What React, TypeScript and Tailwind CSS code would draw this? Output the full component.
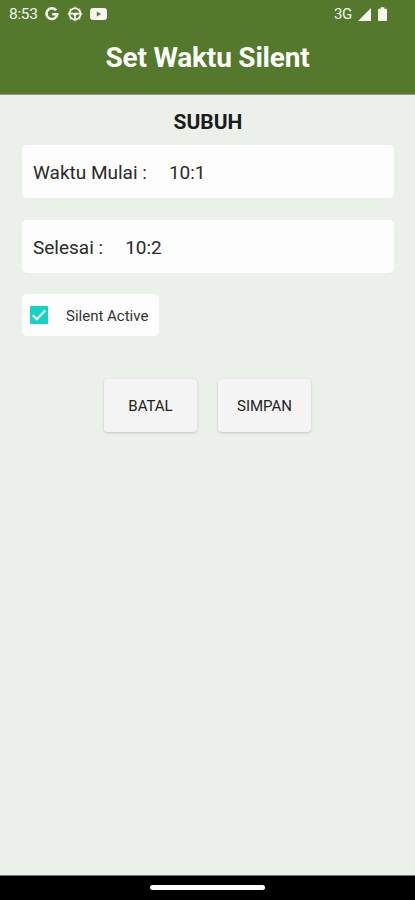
import React from 'react';

function StatusBar() {
  return (
    <div className="flex h-7 items-center pl-[9px] pr-[28px] text-[#f4f8ee]">
      <span className="w-[36px] text-[15.5px] leading-7 tracking-[-0.3px]">8:53</span>
      <svg className="h-[14px] w-[14px]" viewBox="0 0 14 14" fill="none" stroke="currentColor" strokeWidth="2.5">
        <path d="M11.2 3.3A5.4 5.4 0 1 0 12.3 7.3H7.3" />
      </svg>
      <svg className="ml-[8px] h-[16px] w-[16px]" viewBox="0 0 16 16" fill="none" stroke="currentColor">
        <circle cx="8" cy="8" r="5.6" strokeWidth="1.8" />
        <circle cx="8" cy="8" r="6.8" strokeWidth="0.9" strokeDasharray="2.2 3.14" strokeDashoffset="1.1" />
        <path d="M3 7.6h10M8 8v5" strokeWidth="1.6" />
        <path d="M5.5 7H10.5L9 10H7Z" fill="currentColor" stroke="none" />
      </svg>
      <svg className="ml-[7px] h-[12px] w-[17px]" viewBox="0 0 17 12">
        <rect width="17" height="12" rx="3" fill="currentColor" />
        <path d="M6.8 3.5L11 6L6.8 8.5Z" fill="#54782c" />
      </svg>
      <span className="ml-auto w-[24px] text-[15px] leading-7 tracking-[-0.4px]">3G</span>
      <svg className="h-[13px] w-[13px]" viewBox="0 0 13 13" fill="currentColor">
        <path d="M13 0V13H0Z" />
      </svg>
      <svg className="ml-[7px] h-[14px] w-[9px]" viewBox="0 0 9 14" fill="currentColor">
        <path d="M2.7 0.3H6.3V1.8H8Q9 1.8 9 2.8V13Q9 14 8 14H1Q0 14 0 13V2.8Q0 1.8 1 1.8H2.7Z" />
      </svg>
    </div>
  );
}

function TimeField({ label, value }: { label: string; value: string }) {
  return (
    <div className="flex h-[53px] items-center gap-[22px] rounded-[5px] bg-[#fcfdfc] pt-[3px] pl-[11px] text-[19px] text-[#2a2a2a]">
      <span>{label}</span>
      <span>{value}</span>
    </div>
  );
}

function ActionButton({ label }: { label: string }) {
  return (
    <button className="h-[53px] w-[93px] rounded-[4px] bg-[#f3f4f3] pt-[2px] text-[15px] text-[#222] shadow-[0_1px_3px_rgba(0,0,0,0.18)]">
      {label}
    </button>
  );
}

export default function App() {
  return (
    <div className="flex h-[900px] w-[415px] flex-col bg-[#ebf0eb] font-[Roboto,sans-serif]">
      <header className="h-[95px] border-b border-[#8ba570] bg-[#54782c]">
        <StatusBar />
        <h1 className="text-center text-[28px] leading-[59px] font-bold tracking-[-0.2px] text-[#fbfdf9]">Set Waktu Silent</h1>
      </header>
      <main className="flex flex-1 flex-col pr-[21px] pl-[22px]">
        <h2 className="h-[50px] pt-[1px] text-center text-[21px] leading-[52px] font-bold text-[#1b1c1b]">SUBUH</h2>
        <div className="flex flex-col gap-[22px]">
          <TimeField label="Waktu Mulai :" value="10:1" />
          <TimeField label="Selesai :" value="10:2" />
        </div>
        <label className="mt-[21px] flex h-[42px] w-[137px] items-center rounded-[5px] bg-[#fcfdfc] pl-[8px] text-[15px] text-[#333]">
          <svg className="mr-[18px] h-[18px] w-[18px]" viewBox="0 0 18 18">
            <rect width="18" height="18" rx="1" fill="#14d3c4" />
            <path d="M2.8 9.3L6.8 13.2L15.2 4.6" fill="none" stroke="#fff" strokeWidth="2.2" />
          </svg>
          <span className="pt-[2px] whitespace-nowrap">Silent Active</span>
        </label>
        <div className="mt-[43px] flex justify-center gap-[21px] pr-[1px]">
          <ActionButton label="BATAL" />
          <ActionButton label="SIMPAN" />
        </div>
      </main>
      <footer className="flex h-[25px] justify-center border-t border-[#6f726f] bg-black pt-[9px]">
        <div className="h-[5px] w-[115px] rounded-full bg-white" />
      </footer>
    </div>
  );
}
